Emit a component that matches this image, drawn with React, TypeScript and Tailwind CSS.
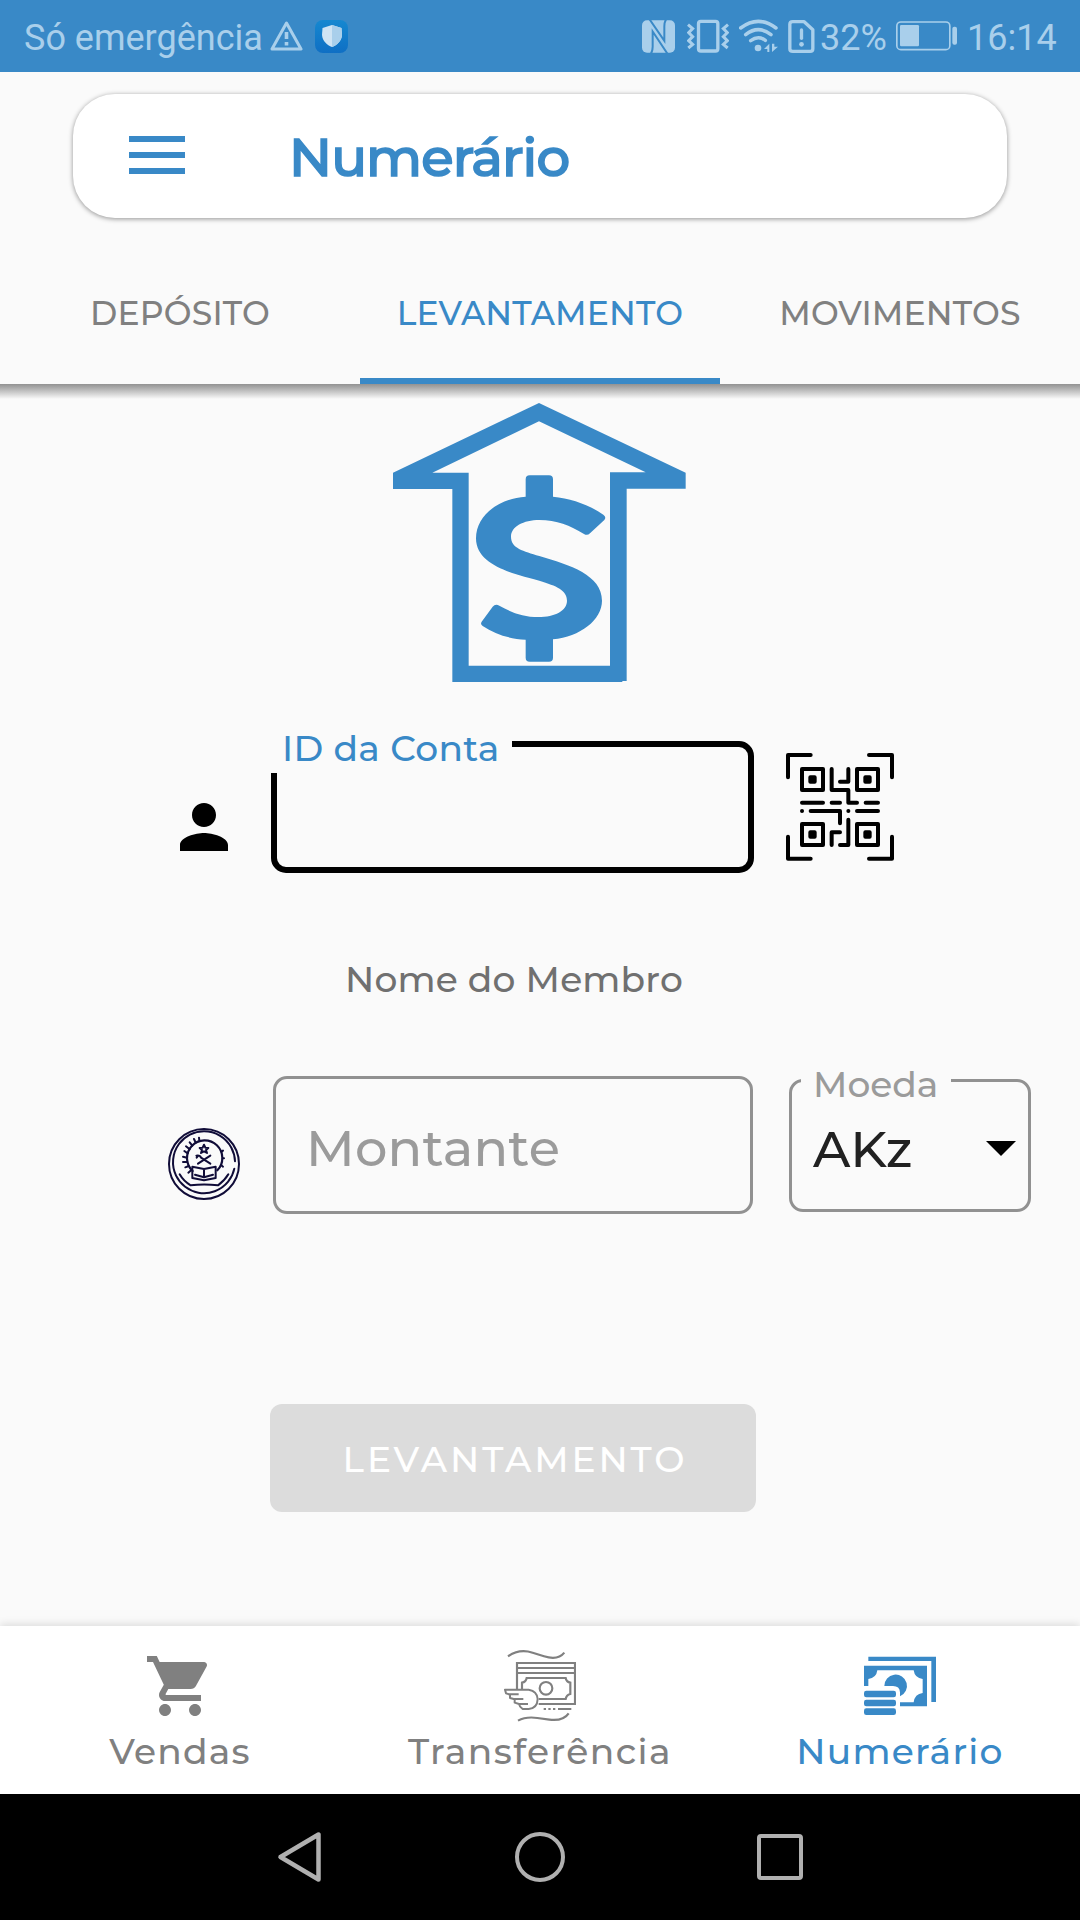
import React from "react";

function StatusBar() {
  return (
    <header className="flex h-[72px] items-center bg-[#3989c7] pl-6 font-['Roboto',sans-serif] text-[36px] leading-none text-[#a9cfeb]">
      <span className="mt-1 w-[246px] whitespace-nowrap">Só emergência</span>
      <svg className="h-[33px] w-[33px]" viewBox="0 0 33 33" fill="none" stroke="currentColor" strokeWidth="3">
        <path d="M16.500 3 L31 29 H2 Z" strokeLinejoin="round" />
        <path d="M16.500 12 V19 M16.500 22 V25.500" strokeWidth="3.600" />
      </svg>
      <div className="ml-3 flex h-[33px] w-[33px] items-center justify-center rounded-[8px] bg-linear-to-b from-[#1688d0] to-[#0f6fc4]">
        <svg className="h-[22px] w-[22px]" viewBox="0 0 22 22">
          <path d="M11 0 L20.500 3 L21 10 C20.500 16 16 20 11 22 C6 20 1.500 16 1 10 L1.500 3 Z" fill="#cfe4f4" />
          <path d="M11 0 L20.500 3 L21 10 C20.500 16 16 20 11 22 Z" fill="#a9cfeb" />
        </svg>
      </div>
      <svg className="ml-[294px] h-[33px] w-[33px]" viewBox="66 60 99 98">
        <rect x="66" y="60" width="99" height="98" rx="15" fill="currentColor" />
        <path d="M89 58 L133 122 V78 Q133 66 138 58 M142 160 L98 94 V140 Q98 152 93 160" fill="none" stroke="#3989c7" strokeWidth="6" />
      </svg>
      <svg className="ml-3 h-[34px] w-[42px]" viewBox="201 58 126 102" fill="none" stroke="currentColor">
        <rect x="235.500" y="65" width="58" height="89" rx="7" strokeWidth="10" />
        <path d="M204 75 L218 87 L206 99 L218 111 L206 123 L218 134 L205 145 M324 75 L310 87 L322 99 L310 111 L322 123 L310 134 L323 145" strokeWidth="9" />
      </svg>
      <svg className="ml-2.5 h-[34px] w-[39px]" viewBox="357 57 117 102" fill="none" stroke="currentColor" strokeWidth="10.500" strokeLinecap="round">
        <path d="M362 84 Q415 44 468 84 M377 104 Q415 74 453 104 M392 122 Q415 105 436 121" />
        <circle cx="414" cy="144" r="10" fill="currentColor" stroke="none" />
        <path d="M432 147 L448 131 V156 H442 V147 Z M456 131 V156 L474 140 H463 V131 Z" fill="currentColor" stroke="none" />
      </svg>
      <svg className="ml-2.5 h-[33px] w-[27px]" viewBox="503 57 80 99" fill="none" stroke="currentColor" strokeWidth="10">
        <path d="M517 62 H551 L577 86 V143 Q577 151 569 151 H517 Q508 151 508 143 V70 Q508 62 517 62 Z" strokeLinejoin="round" />
        <path d="M543 87 V112" strokeLinecap="round" />
        <circle cx="543" cy="130" r="7" fill="currentColor" stroke="none" />
      </svg>
      <span className="mt-1 ml-[5px] w-[76px]">32%</span>
      <svg className="h-[30px] w-[62px]" viewBox="827 65 186 90">
        <rect x="829.500" y="68" width="159" height="83" rx="12" fill="none" stroke="currentColor" strokeWidth="5" />
        <rect x="839" y="77" width="57" height="64" rx="4" fill="currentColor" />
        <rect x="996" y="82" width="14" height="54" rx="6" fill="currentColor" />
      </svg>
      <span className="mt-1 ml-[9px]">16:14</span>
    </header>
  );
}

function TopBar() {
  return (
    <div className="mx-[73px] mt-[22px] flex h-[124px] items-center rounded-[42px] bg-white shadow-[0_1px_5px_rgba(0,0,0,0.42)]">
      <div className="-mt-0.5 ml-14 flex w-14 flex-col gap-2.5">
        <span className="h-1.5 bg-[#3989c7]" />
        <span className="h-1.5 bg-[#3989c7]" />
        <span className="h-1.5 bg-[#3989c7]" />
      </div>
      <h1 className="mt-[3px] ml-[104px] text-[53px] leading-none font-medium tracking-[-0.9px] text-[#3989c7] [-webkit-text-stroke:1.6px_#3989c7]">
        Numerário
      </h1>
    </div>
  );
}

function Tabs() {
  return (
    <nav className="flex h-[166px] pt-[73px] text-[33px] leading-[44px] font-medium tracking-[0.2px] text-[#808080]">
      <div className="flex-1 text-center">DEPÓSITO</div>
      <div className="flex flex-1 flex-col justify-between text-center text-[#3989c7]">
        LEVANTAMENTO
        <span className="h-1.5 bg-[#3989c7]" />
      </div>
      <div className="flex-1 text-center">MOVIMENTOS</div>
    </nav>
  );
}

function CashHouse() {
  return (
    <svg className="mt-1.5 ml-[380px] h-[310px] w-[320px]" viewBox="0 0 960 930" fill="#3989c7">
      <path
        fillRule="evenodd"
        d="M477 39 L917 248 V296 H740 V873 H727 V876 H217 V297 H39 V248 Z M477 94 L157 248 H266 V827 H690 V247 H797 Z"
      />
      <path d="M437 320 V268 q0 -12 12 -12 h58 q12 0 12 12 V320 C575 325 630 346 670 374 q10 8 3 16 L630 430 q-8 8 -18 2 C570 406 530 390 478 390 C430 390 393 410 393 440 C393 475 430 483 478 498 C570 525 666 555 666 632 C666 690 600 740 519 748 V803 q0 12 -12 12 h-58 q-12 0 -12 -12 V749 C390 747 345 733 308 708 q-8 -5 -3 -13 L338 650 q8 -9 20 -3 C395 668 430 681 475 681 C525 681 561 662 561 632 C561 600 530 588 478 572 C410 553 288 530 288 445 C288 380 350 327 437 320 Z" />
    </svg>
  );
}

function QrScan() {
  return (
    <svg className="-mt-px ml-4 h-[140px] w-[140px]" viewBox="0 0 420 420" fill="none" stroke="#000" strokeWidth="12" strokeLinecap="round" strokeLinejoin="round">
      <path d="M54 112 V45 H122 M297 45 H366 V112 M54 290 V356 H122 M297 356 H366 V290" />
      <path d="M96 87 H159 V150 H96 Z M261 87 H324 V150 H261 Z M96 252 H159 V315 H96 Z M261 252 H324 V315 H261 Z" />
      <path d="M121 112 H134 V125 H121 Z M286 112 H299 V125 H286 Z M121 277 H134 V290 H121 Z M286 277 H299 V290 H286 Z" fill="#000" />
      <path d="M185 87 V150 H235 V188 H261 M235 87 V125 H210 M96 188 H159 M185 188 H210 M287 188 H324 M96 213 h.1 M122 213 H210 V250 M235 213 h.1 M261 213 H324 M235 239 V315 H210 M185 315 V277 H210" />
    </svg>
  );
}

function Emblem() {
  return (
    <svg className="mt-[52px] h-[72px] w-[72px]" viewBox="54 204 216 216" fill="none" stroke="#100c38" strokeWidth="6" strokeLinecap="round" strokeLinejoin="round">
      <circle cx="162" cy="312" r="105" />
      <path d="M255 304 A93 93 0 1 0 253 326" />
      <path d="M128 333 A53 53 0 1 1 202 331" strokeWidth="6.500" />
      <path d="M116 318 L106 322 M112 306 L99 306 M111 293 L99 290 M113 280 L103 273 M119 268 L108 259 M127 257 L119 247 M137 248 L132 237 M148 242 L147 233 M124 330 L115 338 M215 275 L219 272 M218 295 L222 295 M214 316 L219 320" />
      <path d="M162 254 L166 263 L175 264 L168 270 L171 279 L162 274 L153 279 L156 270 L149 264 L158 263 Z" />
      <path d="M181 287 L144 311 M139 287 Q150 285 153 293 L181 311 M140 293 L144 288" />
      <path d="M127 320 L162 327 L197 320 V354 L162 361 L127 354 Z M162 327 V352 M135 344 L162 352 L189 344" />
      <path d="M89 343 Q101 364 122 376 Q162 371 204 376 Q224 362 235 343" />
    </svg>
  );
}

function AccountRow() {
  return (
    <div className="mt-[41px] flex items-start pl-[168px]">
      <svg className="mt-[50px] h-[72px] w-[72px]" viewBox="0 0 24 24">
        <path d="M12 12c2.210 0 4-1.790 4-4s-1.790-4-4-4-4 1.790-4 4 1.790 4 4 4zm0 2c-2.670 0-8 1.340-8 4v2h16v-2c0-2.660-5.330-4-8-4z" />
      </svg>
      <div className="relative ml-[31px] h-[132px] w-[483px] rounded-[15px] border-[6px] border-black">
        <label className="absolute -top-4 -left-1.5 h-[42px] w-[241px] bg-[#fafafa] pl-[11px] text-[36px] leading-[35px] font-medium tracking-[0.3px] whitespace-nowrap text-[#3989c7]">
          ID da Conta
        </label>
      </div>
      <QrScan />
    </div>
  );
}

function AmountRow() {
  return (
    <div className="mt-[74px] flex items-start pl-[168px]">
      <Emblem />
      <div className="ml-[33px] flex h-[138px] w-[480px] items-center rounded-[14px] border-[3px] border-[#919191] pt-1.5 pl-[30px] text-[51px] leading-none font-medium tracking-[0.2px] text-[#9b9b9b]">
        Montante
      </div>
      <div className="relative mt-[3px] ml-9 flex h-[133px] w-[242px] items-center justify-between rounded-[14px] border-[3px] border-[#919191] pt-2 pr-3 pl-[21px] text-[51px] leading-none font-medium text-[#212121]">
        <span className="absolute -top-[18px] left-[9px] h-10 w-[150px] bg-[#fafafa] pl-3 text-[36px] leading-10 text-[#9b9b9b]">Moeda</span>
        AKz
        <svg className="-mt-[3px] h-[15px] w-[30px]" viewBox="0 0 30 15">
          <path d="M0 0 H30 L15 15 Z" />
        </svg>
      </div>
    </div>
  );
}

function TransferIcon() {
  return (
    <svg className="h-[72px] w-[72px]" viewBox="72 60 216 216" fill="none" stroke="#808080" strokeWidth="6.500">
      <path d="M84 79 Q118 55 158 68 L192 79 Q234 92 253 68" />
      <path d="M114 272 Q138 259 172 264 L208 269 Q250 274 266 250" />
      <path d="M111 178 V99 H285 V222 H176 M111 114 H285 M111 129 H285" />
      <path d="M126 178 V158 Q138 156 140 144 H257 Q259 156 271 158 V192 Q259 195 257 207 H176" />
      <circle cx="198" cy="175" r="19" />
      <path d="M75 179 H146 Q172 184 173 207 Q172 235 146 237 H128 Q118 230 117 222 L104 218 V208 L90 204 V194 L78 190 Z M84 193 H116 M98 207 H130 M112 222 H144" strokeLinejoin="round" strokeWidth="6" />
      <path d="M191 237 H198 M205 237 H212 M219 237 H226 M234 237 H274" />
    </svg>
  );
}

function CashIcon() {
  return (
    <svg className="h-[72px] w-[72px]" viewBox="1152 60 216 216" fill="#3989c7">
      <path d="M1165 80 H1368 V216 H1354 V93 H1165 Z" />
      <path
        fillRule="evenodd"
        d="M1152 107 H1341 V229 H1260 V217 H1301 Q1304 192 1328 189 V147 Q1304 144 1301 121 H1192 Q1189 144 1165 147 V168 H1152 Z"
      />
      <path d="M1213 168 A34 34 0 1 1 1260 199 V187 Q1259 168 1239 168 Z" />
      <rect x="1152" y="182" width="96" height="20" rx="7" />
      <rect x="1152" y="209" width="96" height="20" rx="7" />
      <rect x="1152" y="235" width="96" height="20" rx="7" />
    </svg>
  );
}

function BottomNav() {
  return (
    <nav className="flex h-[168px] bg-white text-[36px] leading-[44px] font-medium text-[#808080] shadow-[0_-2px_8px_rgba(0,0,0,0.12)]">
      <div className="flex flex-1 flex-col items-center pt-6">
        <svg className="h-[72px] w-[72px]" viewBox="0 0 24 24" fill="#808080">
          <path d="M7 18c-1.100 0-1.990.9-1.990 2S5.900 22 7 22s2-.9 2-2-.9-2-2-2zM1 2v2h2l3.600 7.590-1.350 2.450c-.16.28-.25.61-.25.960 0 1.100.9 2 2 2h12v-2H7.420c-.14 0-.25-.11-.25-.25l.03-.12.9-1.630h7.450c.75 0 1.410-.41 1.750-1.030l3.580-6.490c.08-.14.12-.31.12-.48 0-.55-.45-1-1-1H5.210l-.94-2H1zm16 16c-1.100 0-1.990.9-1.990 2s.89 2 1.990 2 2-.9 2-2-.9-2-2-2z" />
        </svg>
        <span className="mt-[7px] tracking-[1.2px]">Vendas</span>
      </div>
      <div className="flex flex-1 flex-col items-center pt-6">
        <TransferIcon />
        <span className="mt-[7px] tracking-[1.45px]">Transferência</span>
      </div>
      <div className="flex flex-1 flex-col items-center pt-6 text-[#3989c7]">
        <CashIcon />
        <span className="mt-[7px] tracking-[1.3px]">Numerário</span>
      </div>
    </nav>
  );
}

function SystemNav() {
  return (
    <footer className="flex h-[126px] items-center bg-black pl-[277px]">
      <svg className="h-[52px] w-[46px]" viewBox="0 0 46 52" fill="none" stroke="#b0b0b0" strokeWidth="4.500" strokeLinejoin="round">
        <path d="M41.500 3.500 V48.500 L3.500 26 Z" />
      </svg>
      <div className="ml-[192px] h-[50px] w-[50px] rounded-full border-4 border-[#b0b0b0]" />
      <div className="ml-[192px] h-[46px] w-[46px] rounded-[4px] border-4 border-[#b0b0b0]" />
    </footer>
  );
}

export default function App() {
  return (
    <div className="flex h-[1920px] w-[1080px] flex-col overflow-hidden bg-[#fafafa] font-['Montserrat','Inter',sans-serif]">
      <StatusBar />
      <TopBar />
      <Tabs />
      <main className="flex flex-1 flex-col">
        <div className="-mb-[15px] h-[15px] shrink-0 bg-linear-to-b from-[#929292] to-[#fafafa]" />
        <CashHouse />
        <AccountRow />
        <p className="mt-[76px] ml-[154px] w-[720px] text-center text-[36px] leading-[46px] font-medium tracking-[0.2px] text-[#707070]">Nome do Membro</p>
        <AmountRow />
        <button className="mt-[190px] ml-[270px] h-[108px] w-[486px] rounded-[12px] bg-[#dcdcdc] pt-px pl-1 text-[36px] leading-none font-medium tracking-[2.9px] text-white">
          LEVANTAMENTO
        </button>
      </main>
      <BottomNav />
      <SystemNav />
    </div>
  );
}
